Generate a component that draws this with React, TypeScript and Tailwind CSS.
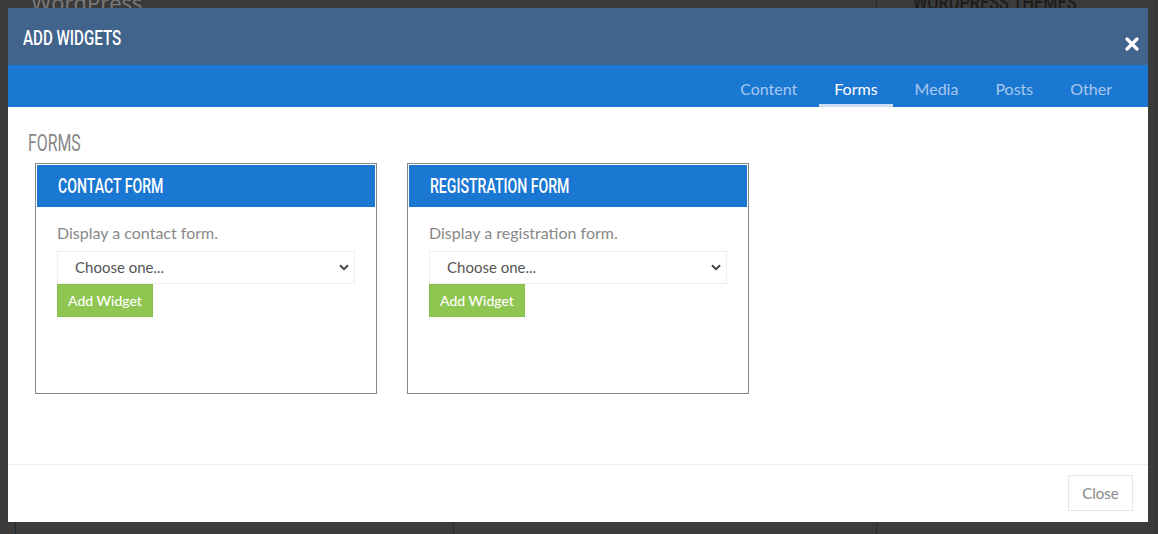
import { useState } from 'react';

const tabs = ['Content', 'Forms', 'Media', 'Posts', 'Other'];

const forms = [
  { title: 'CONTACT FORM', text: 'Display a contact form.' },
  { title: 'REGISTRATION FORM', text: 'Display a registration form.' },
];

const heading = { fontFamily: 'Roboto, "DejaVu Sans Condensed", sans-serif' };

function Chevron() {
  return (
    <svg width="10" height="7" viewBox="0 0 10 7" className="pointer-events-none absolute right-[6px] top-[13px]">
      <path d="M1 1.2 5 5.2 9 1.2" fill="none" stroke="#444" strokeWidth="2" />
    </svg>
  );
}

function FormCard({ title, text }: { title: string; text: string }) {
  return (
    <div className="w-[342px] h-[231px] border border-[#888] p-px bg-white">
      <div className="h-[42px] bg-[#1a77d2] pl-[21px] flex items-center">
        <h3
          className="inline-block origin-left scale-x-[0.705] text-white text-[20px] font-medium whitespace-nowrap"
          style={heading}
        >
          {title}
        </h3>
      </div>
      <div className="px-[20px] pt-[16px]">
        <p className="text-[16px] leading-[20px] text-[#888]">{text}</p>
        <div className="relative mt-[8px] w-[298px]">
          <select className="appearance-none w-full h-[33px] border border-[#eee] bg-white pl-[17px] text-[15px] text-[#555] outline-none">
            <option>Choose one...</option>
          </select>
          <Chevron />
        </div>
        <button className="h-[33px] w-[96px] bg-[#8fc651] border border-[#86bf48] text-white text-[14px] font-medium">
          Add Widget
        </button>
      </div>
    </div>
  );
}

export default function App() {
  const [active, setActive] = useState('Forms');

  return (
    <div
      className="relative w-[1158px] h-[534px] overflow-hidden bg-[#3b3b3b] p-[8px]"
      style={{ fontFamily: 'Lato, "Open Sans", sans-serif' }}
    >
      {/* page behind the overlay */}
      <div className="absolute left-[31px] top-[-14px] text-[22px] text-[#7a7a7a]" style={{ fontFamily: '"Open Sans", sans-serif' }}>
        WordPress
      </div>
      <div
        className="absolute left-[913px] top-[-14px] origin-left scale-x-[0.74] text-[22px] font-medium text-[#1c1c1c] whitespace-nowrap"
        style={heading}
      >
        WORDPRESS THEMES
      </div>
      <div className="absolute left-[876px] top-0 h-full w-px bg-[#2a2a2a]" />
      <div className="absolute left-[1155px] top-0 h-full border-l border-dotted border-[#1d2b38]" />
      <div className="absolute left-[15px] bottom-0 h-[12px] w-px bg-[#1d2b38]" />
      <div className="absolute left-[453px] bottom-0 h-[12px] w-px bg-[#1d2b38]" />

      <div className="relative w-[1140px] h-[514px] bg-white flex flex-col">
        <div className="h-[57px] bg-[#41648c] flex items-start justify-between pl-[15px] pr-[7px]">
          <h2
            className="mt-[15px] inline-block origin-left scale-x-[0.72] text-white text-[21px] font-medium whitespace-nowrap"
            style={heading}
          >
            ADD WIDGETS
          </h2>
          <button className="mt-[27px] w-[18px] h-[18px] flex items-center justify-center" aria-label="Close">
            <svg width="14" height="14" viewBox="0 0 14 14">
              <path d="M2 2 12 12M12 2 2 12" stroke="#fff" strokeWidth="3.2" strokeLinecap="round" />
            </svg>
          </button>
        </div>

        <div className="h-[42px] bg-[#1a77d2] flex justify-end items-stretch gap-[7px] pr-[21px]">
          {tabs.map((t) => (
            <button
              key={t}
              onClick={() => setActive(t)}
              className={
                t === active
                  ? 'px-[15px] pt-[8px] text-[16px] text-white border-b-[3px] border-[#cfe0f4]'
                  : 'px-[15px] pt-[8px] text-[16px] text-[#a9c8ee] border-b-[3px] border-transparent'
              }
            >
              {t}
            </button>
          ))}
        </div>

        <div className="flex-1 px-[20px] pt-[24px]">
          <h2
            className="inline-block origin-left scale-x-[0.69] text-[23px] leading-[26px] text-[#888]"
            style={heading}
          >
            FORMS
          </h2>
          <div className="flex gap-[30px] mt-[6px] ml-[7px]">
            {forms.map((f) => (
              <FormCard key={f.title} title={f.title} text={f.text} />
            ))}
          </div>
        </div>

        <div className="h-[58px] border-t border-[#eee] flex items-start justify-end pr-[15px] pt-[10px]">
          <button className="w-[65px] h-[36px] border border-[#e6e6e6] text-[15px] text-[#888]">Close</button>
        </div>
      </div>
    </div>
  );
}
